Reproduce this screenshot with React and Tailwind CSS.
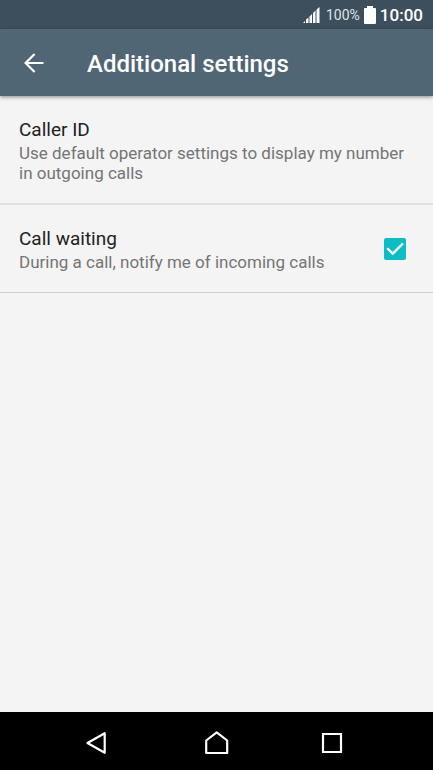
import { useState } from "react";

function StatusBar() {
  return (
    <div className="flex h-[29px] shrink-0 items-center justify-end bg-[#3d4f5d] pr-[10px] pt-px text-white">
      <svg className="mr-1.5 h-4 w-[17px]" viewBox="0 0 17 16" fill="currentColor" aria-hidden="true">
        <path d="M0 16L2 14V16ZM3 16V12.5L5.5 10.5V16ZM6.5 16V9.5L9 7V16ZM10 16V6L12.5 3.5V16ZM13.5 16V2.5L16.5 0V16Z" />
      </svg>
      <span className="mr-1 text-[14px] leading-5 text-[#dfe4e7]">100%</span>
      <svg className="mr-1 h-[18px] w-3" viewBox="0 0 12 18" fill="currentColor" aria-hidden="true">
        <path d="M3 0H9V2H11Q12 2 12 3V17Q12 18 11 18H1Q0 18 0 17V3Q0 2 1 2H3Z" />
      </svg>
      <span className="text-[17px] font-medium leading-5">10:00</span>
    </div>
  );
}

function AppBar() {
  return (
    <header className="relative flex h-[67px] shrink-0 items-center bg-[#506675] text-white shadow-[0_1px_4px_rgba(0,0,0,0.45)]">
      <button type="button" aria-label="Back" className="ml-6 mr-[43px]">
        <svg className="block size-5" viewBox="0 0 20 20" fill="none" stroke="currentColor" strokeWidth="2.2" aria-hidden="true">
          <path d="M19.5 10H2M10.6 1L1.6 10L10.6 19" />
        </svg>
      </button>
      <h1 className="pt-0.5 text-[24px] font-medium leading-8">Additional settings</h1>
    </header>
  );
}

function Checkbox({ id, checked, onChange }) {
  return (
    <span className="relative mr-2 block size-[22px] shrink-0">
      <input
        id={id}
        type="checkbox"
        checked={checked}
        onChange={onChange}
        className="block size-[22px] appearance-none rounded-[2px] border-2 border-[#757575] checked:border-[#0dbdc6] checked:bg-[#0dbdc6]"
      />
      {checked && (
        <svg className="pointer-events-none absolute inset-0 size-[22px]" viewBox="0 0 22 22" fill="none" stroke="white" strokeWidth="2.2" aria-hidden="true">
          <path d="M3.3 10.3L8.8 15.6L19 5.4" />
        </svg>
      )}
    </span>
  );
}

export default function App() {
  const [waiting, setWaiting] = useState(true);
  return (
    <div className="flex min-h-screen flex-col bg-[#f4f4f4] font-[Roboto,sans-serif]">
      <StatusBar />
      <AppBar />
      <main className="flex-1">
        <button type="button" className="block w-full border-b-2 border-[#dfdfdf] px-[19px] py-5 text-left">
          <span className="block text-[19px] leading-[27px] text-[#212121]">Caller ID</span>
          <span className="block text-[17px] leading-5 text-[#757575]">
            Use default operator settings to display my number in outgoing calls
          </span>
        </button>
        <label htmlFor="call-waiting" className="flex items-center border-b border-[#d0d0d0] px-[19px] py-5">
          <span className="flex-1">
            <span className="block text-[19px] leading-[27px] text-[#212121]">Call waiting</span>
            <span className="block text-[17px] leading-5 text-[#757575]">
              During a call, notify me of incoming calls
            </span>
          </span>
          <Checkbox id="call-waiting" checked={waiting} onChange={(e) => setWaiting(e.target.checked)} />
        </label>
      </main>
      <nav className="flex h-[58px] shrink-0 items-center justify-center bg-black pr-[3px] pt-1 text-white">
        <button type="button" aria-label="Back" className="mr-24">
          <svg className="block size-6" viewBox="0 0 24 24" fill="none" stroke="currentColor" strokeWidth="2.2" strokeLinejoin="round" aria-hidden="true">
            <path d="M2.5 12L19.7 2.2V21.8Z" />
          </svg>
        </button>
        <button type="button" aria-label="Home" className="mr-[92px]">
          <svg className="block size-6" viewBox="0 0 24 24" fill="none" stroke="currentColor" strokeWidth="2.2" strokeLinejoin="round" aria-hidden="true">
            <path d="M1.2 22V9.5L11.7 1.3L22.2 9.5V22Z" />
          </svg>
        </button>
        <button type="button" aria-label="Recent apps">
          <svg className="block size-6" viewBox="0 0 24 24" fill="none" stroke="currentColor" strokeWidth="2.2" aria-hidden="true">
            <path d="M2 3H20V21H2Z" />
          </svg>
        </button>
      </nav>
    </div>
  );
}
